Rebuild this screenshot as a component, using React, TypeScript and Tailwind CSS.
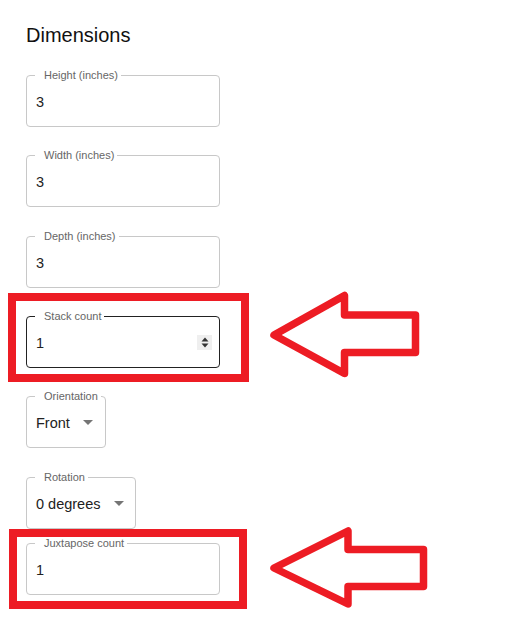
import React from "react";

type FieldProps = {
  label: string;
  value: string;
  kind?: "text" | "number" | "select";
  active?: boolean;
  className?: string;
};

const ArrowDrop = () => (
  <svg width="10" height="5" viewBox="0 0 10 5" className="shrink-0">
    <path d="M0 0h10L5 5z" fill="#757575" />
  </svg>
);

const Spinner = () => (
  <div className="w-[15px] h-[15px] bg-[#efefef] flex items-center justify-center">
    <svg width="8" height="11" viewBox="0 0 8 11">
      <path d="M4 0.5L7.5 4.5H0.5z" fill="#333" />
      <path d="M4 10.5L7.5 6.5H0.5z" fill="#333" />
    </svg>
  </div>
);

const Field = ({ label, value, kind = "text", active, className = "" }: FieldProps) => (
  <div
    className={`relative h-[52px] rounded-[4px] border ${
      active ? "border-[#222]" : "border-[#c8c8c8]"
    } flex items-center pl-[9px] ${className}`}
  >
    <span className="absolute left-[8px] top-[-7px] bg-white pl-[9px] pr-[3px] text-[11px] leading-[12px] text-[#666] whitespace-nowrap">
      {label}
    </span>
    <span className="text-[14.5px] leading-[18px] pt-[1px] text-[#222] whitespace-nowrap">{value}</span>
    {kind === "select" && (
      <span className="ml-[13px] pr-[12px] shrink-0">
        <ArrowDrop />
      </span>
    )}
    {kind === "number" && (
      <span className="ml-auto pr-[7px] shrink-0">
        <Spinner />
      </span>
    )}
  </div>
);

export default function App() {
  return (
    <div
      className="relative w-[522px] h-[617px] bg-white overflow-hidden"
      style={{ fontFamily: '"Liberation Sans", Arial, sans-serif' }}
    >
      <div className="pl-[26px] pt-[23px] flex flex-col items-start">
        <h2 className="text-[20px] leading-[24px] text-[#111]">Dimensions</h2>
        <Field label="Height (inches)" value="3" className="w-[194px] mt-[28px]" />
        <Field label="Width (inches)" value="3" className="w-[194px] mt-[28px]" />
        <Field label="Depth (inches)" value="3" className="w-[194px] mt-[29px]" />
        <Field label="Stack count" value="1" kind="number" active className="w-[194px] mt-[28px]" />
        <Field label="Orientation" value="Front" kind="select" className="w-[80px] mt-[28px]" />
        <Field label="Rotation" value="0 degrees" kind="select" className="w-[110px] h-[51px] mt-[29px]" />
        <Field label="Juxtapose count" value="1" className="w-[194px] mt-[14px]" />
      </div>

      {/* annotation boxes */}
      <div className="absolute left-[8px] top-[293px] w-[241px] h-[89px] border-[8px] border-[#ed1c24]" />
      <div className="absolute left-[9px] top-[529px] w-[238px] h-[80px] border-[8px] border-[#ed1c24]" />

      <svg className="absolute left-0 top-0" width="522" height="617" viewBox="0 0 522 617">
        <polygon
          points="274,335 344.5,295.5 344.5,315 415.5,315 415.5,352.5 344.5,352.5 344.5,373.5"
          fill="none"
          stroke="#ed1c24"
          strokeWidth="7.5"
          strokeLinejoin="round"
        />
        <polygon
          points="274,568 348,531 348,549.5 423.5,549.5 423.5,586.5 348,586.5 348,604"
          fill="none"
          stroke="#ed1c24"
          strokeWidth="7.5"
          strokeLinejoin="round"
        />
      </svg>
    </div>
  );
}
